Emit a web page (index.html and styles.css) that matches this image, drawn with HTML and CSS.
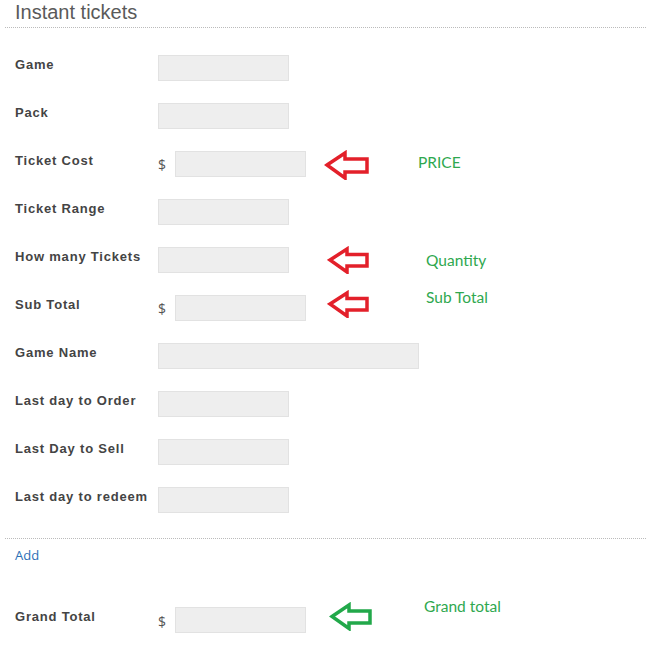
FILE: index.html
```html
<!DOCTYPE html>
<html>
<head>
<meta charset="utf-8">
<link rel="stylesheet" href="styles.css">
</head>
<body>
<h2 class="title">Instant tickets</h2>
<div class="box">
  <div class="row"><label class="lbl">Game</label><div class="field"><input class="inp"></div></div>
  <div class="row"><label class="lbl">Pack</label><div class="field"><input class="inp"></div></div>
  <div class="row"><label class="lbl">Ticket Cost</label><div class="field"><span class="cur">$</span><input class="inp">
    <svg class="arrow a-cost" width="46" height="30" viewBox="0 0 46 30"><path d="M3,15 L21,3 L21,9 L43,9 L43,22 L21,22 L21,28 Z" fill="#fff" stroke="#e3202a" stroke-width="3.5" stroke-linejoin="miter"/></svg>
    <span class="note n-cost">PRICE</span></div></div>
  <div class="row"><label class="lbl">Ticket Range</label><div class="field"><input class="inp"></div></div>
  <div class="row"><label class="lbl">How many Tickets</label><div class="field"><input class="inp">
    <svg class="arrow a-qty" width="43" height="28" viewBox="0 0 43 28"><path d="M3,14 L20,3 L20,8.5 L40,8.5 L40,20 L20,20 L20,26 Z" fill="#fff" stroke="#e3202a" stroke-width="3.5"/></svg>
    <span class="note n-qty">Quantity</span></div></div>
  <div class="row"><label class="lbl">Sub Total</label><div class="field"><span class="cur">$</span><input class="inp">
    <svg class="arrow a-sub" width="43" height="28" viewBox="0 0 43 28"><path d="M3,14 L20,3 L20,8.5 L40,8.5 L40,20 L20,20 L20,26 Z" fill="#fff" stroke="#e3202a" stroke-width="3.5"/></svg>
    <span class="note n-sub">Sub Total</span></div></div>
  <div class="row"><label class="lbl">Game Name</label><div class="field"><input class="inp wide"></div></div>
  <div class="row"><label class="lbl">Last day to Order</label><div class="field"><input class="inp"></div></div>
  <div class="row"><label class="lbl">Last Day to Sell</label><div class="field"><input class="inp"></div></div>
  <div class="row"><label class="lbl">Last day to redeem</label><div class="field"><input class="inp"></div></div>
</div>
<a class="add" href="#">Add</a>
<div class="row grand"><label class="lbl">Grand Total</label><div class="field"><span class="cur">$</span><input class="inp">
  <svg class="arrow a-grand" width="44" height="29" viewBox="0 0 44 29"><path d="M3,14.5 L20,3 L20,9 L41,9 L41,21 L20,21 L20,26.5 Z" fill="#fff" stroke="#22a84a" stroke-width="3.5"/></svg>
  <span class="note n-grand">Grand total</span></div></div>
</body>
</html>
```
FILE: styles.css
```css
html, body { margin: 0; padding: 0; background: #fff; }
body { font-family: "Liberation Sans", Arial, sans-serif; font-size: 13px; color: #444; width: 646px; height: 652px; overflow: hidden; }
.title { margin: 0; padding: 0 0 0 15px; font-size: 20px; font-weight: normal; color: #5a5a5a; line-height: 24px; height: 27px; }
.box { margin-left: 5px; border-top: 1px dotted #bbb; border-bottom: 1px dotted #bbb; padding: 27px 0 25px 0; display: flex; flex-direction: column; gap: 22px; }
.row { display: flex; align-items: flex-start; height: 26px; }
.box .row { padding-left: 10px; }
.lbl { width: 143px; flex: none; font-weight: bold; color: #444; line-height: 15px; padding-top: 2px; letter-spacing: 0.8px; white-space: nowrap; }
.field { display: flex; align-items: center; height: 26px; }
.cur { color: #555; width: 17px; padding-top: 0; font-size: 14px; font-family: "Open Sans", "Liberation Sans", sans-serif; }
.grand .cur { padding-top: 3px; }
.inp { box-sizing: border-box; width: 131px; height: 26px; margin: 0; border: 1px solid #e2e2e2; background: #eee; padding: 0; }
.inp.wide { width: 261px; }
.arrow { flex: none; display: block; }
.note { font-family: Lato, "Open Sans", sans-serif; font-size: 15.5px; color: #2fa84f; white-space: nowrap; }
.a-cost { margin-left: 18px; margin-top: 2px; }
.n-cost { margin-left: 48px; margin-top: -4px; }
.a-qty { margin-left: 38px; margin-top: 0; }
.n-qty { margin-left: 56px; }
.a-sub { margin-left: 21px; margin-top: -8px; }
.n-sub { margin-left: 56px; margin-top: -22px; }
.add { display: block; margin: 7px 0 0 15px; color: #2b6fb6; text-decoration: none; font-family: "Open Sans", "Liberation Sans", sans-serif; font-size: 13px; line-height: 18px; height: 18px; }
.grand { margin-top: 43px; padding-left: 15px; }
.a-grand { margin-left: 23px; margin-top: -7px; }
.n-grand { margin-left: 51px; margin-top: -29px; }
```
